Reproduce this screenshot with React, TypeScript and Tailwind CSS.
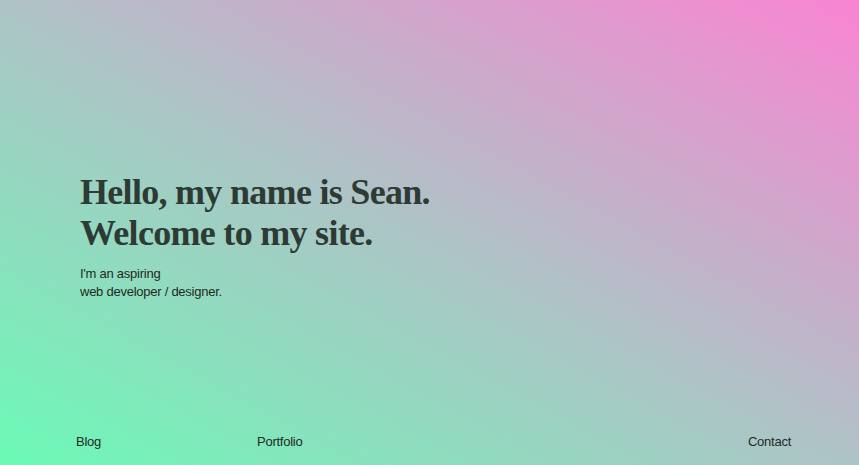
export default function App() {
  return (
    <div className="flex h-[465px] w-full flex-col overflow-hidden bg-[linear-gradient(to_top_right,#6bfab6_0%,#aec3c6_50%,#fa84d2_100%)] font-['Liberation_Sans',Arial,sans-serif] text-[#1f2a25]">
      <main className="flex flex-1 flex-col justify-center pl-[80px] pt-[42px]">
        <h1 className="font-['Liberation_Serif',Georgia,serif] text-[36px] font-bold leading-[41px] tracking-[-0.7px] text-[#2e3a34]">
          Hello, my name is Sean.
          <br />
          Welcome to my site.
        </h1>
        <p className="mt-[11px] text-[13px] leading-[18px] tracking-[-0.25px]">
          I'm an aspiring
          <br />
          web developer / designer.
        </p>
      </main>
      <nav className="flex items-center pb-[14px] pl-[76px] pr-[68px] text-[13px] tracking-[-0.25px]">
        <a href="#" className="w-[181px]">Blog</a>
        <a href="#">Portfolio</a>
        <a href="#" className="ml-auto">Contact</a>
      </nav>
    </div>
  );
}
